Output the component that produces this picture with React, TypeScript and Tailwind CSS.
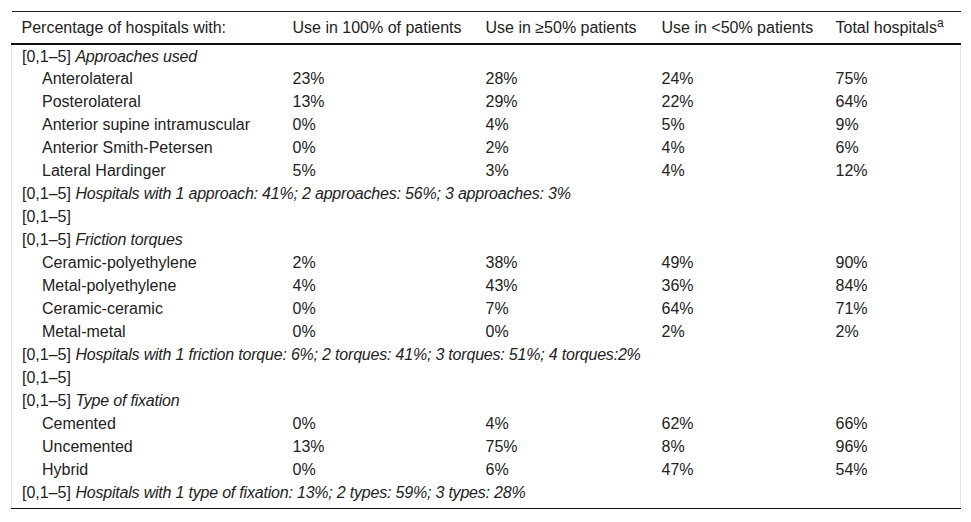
import React from 'react'

type Row =
  | { kind: 'group'; label: string }
  | { kind: 'data'; label: string; values: string[] }

const rows: Row[] = [
  { kind: 'group', label: 'Approaches used' },
  { kind: 'data', label: 'Anterolateral', values: ['23%', '28%', '24%', '75%'] },
  { kind: 'data', label: 'Posterolateral', values: ['13%', '29%', '22%', '64%'] },
  { kind: 'data', label: 'Anterior supine intramuscular', values: ['0%', '4%', '5%', '9%'] },
  { kind: 'data', label: 'Anterior Smith-Petersen', values: ['0%', '2%', '4%', '6%'] },
  { kind: 'data', label: 'Lateral Hardinger', values: ['5%', '3%', '4%', '12%'] },
  { kind: 'group', label: 'Hospitals with 1 approach: 41%; 2 approaches: 56%; 3 approaches: 3%' },
  { kind: 'group', label: '' },
  { kind: 'group', label: 'Friction torques' },
  { kind: 'data', label: 'Ceramic-polyethylene', values: ['2%', '38%', '49%', '90%'] },
  { kind: 'data', label: 'Metal-polyethylene', values: ['4%', '43%', '36%', '84%'] },
  { kind: 'data', label: 'Ceramic-ceramic', values: ['0%', '7%', '64%', '71%'] },
  { kind: 'data', label: 'Metal-metal', values: ['0%', '0%', '2%', '2%'] },
  { kind: 'group', label: 'Hospitals with 1 friction torque: 6%; 2 torques: 41%; 3 torques: 51%; 4 torques:2%' },
  { kind: 'group', label: '' },
  { kind: 'group', label: 'Type of fixation' },
  { kind: 'data', label: 'Cemented', values: ['0%', '4%', '62%', '66%'] },
  { kind: 'data', label: 'Uncemented', values: ['13%', '75%', '8%', '96%'] },
  { kind: 'data', label: 'Hybrid', values: ['0%', '6%', '47%', '54%'] },
  { kind: 'group', label: 'Hospitals with 1 type of fixation: 13%; 2 types: 59%; 3 types: 28%' },
]

export default function App() {
  return (
    <div className="min-h-[522px] w-[971px] bg-white pl-[11px] pt-[11px] text-[16px] leading-[19px] text-[#222] font-['Liberation_Sans',Arial,sans-serif]">
      <table className="w-[949px] table-fixed border-collapse">
        <colgroup>
          <col className="w-[271px]" />
          <col className="w-[193px]" />
          <col className="w-[176px]" />
          <col className="w-[174px]" />
          <col className="w-[135px]" />
        </colgroup>
        <thead>
          <tr className="h-[32px] border-t border-b-2 border-t-[#222] border-b-[#111] text-left">
            <th className="pl-[10px] pt-[1px] font-normal whitespace-nowrap">Percentage of hospitals with:</th>
            <th className="pl-[10px] pt-[1px] font-normal whitespace-nowrap">Use in 100% of patients</th>
            <th className="pl-[10px] pt-[1px] font-normal whitespace-nowrap">Use in ≥50% patients</th>
            <th className="pl-[10px] pt-[1px] font-normal whitespace-nowrap">Use in &lt;50% patients</th>
            <th className="pl-[10px] pt-[1px] font-normal whitespace-nowrap">
              Total hospitals<sup className="text-[12px]">a</sup>
            </th>
          </tr>
        </thead>
        <tbody className="border-x border-x-[#e6e6e6] border-b border-b-[#111]">
          {rows.map((r, i) =>
            r.kind === 'group' ? (
              <tr key={i} className="h-[23px]">
                <td colSpan={5} className="pl-[10px] pt-[1px] whitespace-nowrap">
                  [0,1–5] {r.label && <i className="tracking-[-0.2px]">{r.label}</i>}
                </td>
              </tr>
            ) : (
              <tr key={i} className="h-[23px]">
                <td className="pl-[30px] pt-[1px] whitespace-nowrap">{r.label}</td>
                {r.values.map((v, j) => (
                  <td key={j} className="pl-[10px] pt-[1px]">{v}</td>
                ))}
              </tr>
            )
          )}
          <tr className="h-[5px]">
            <td colSpan={5} />
          </tr>
        </tbody>
      </table>
    </div>
  )
}
